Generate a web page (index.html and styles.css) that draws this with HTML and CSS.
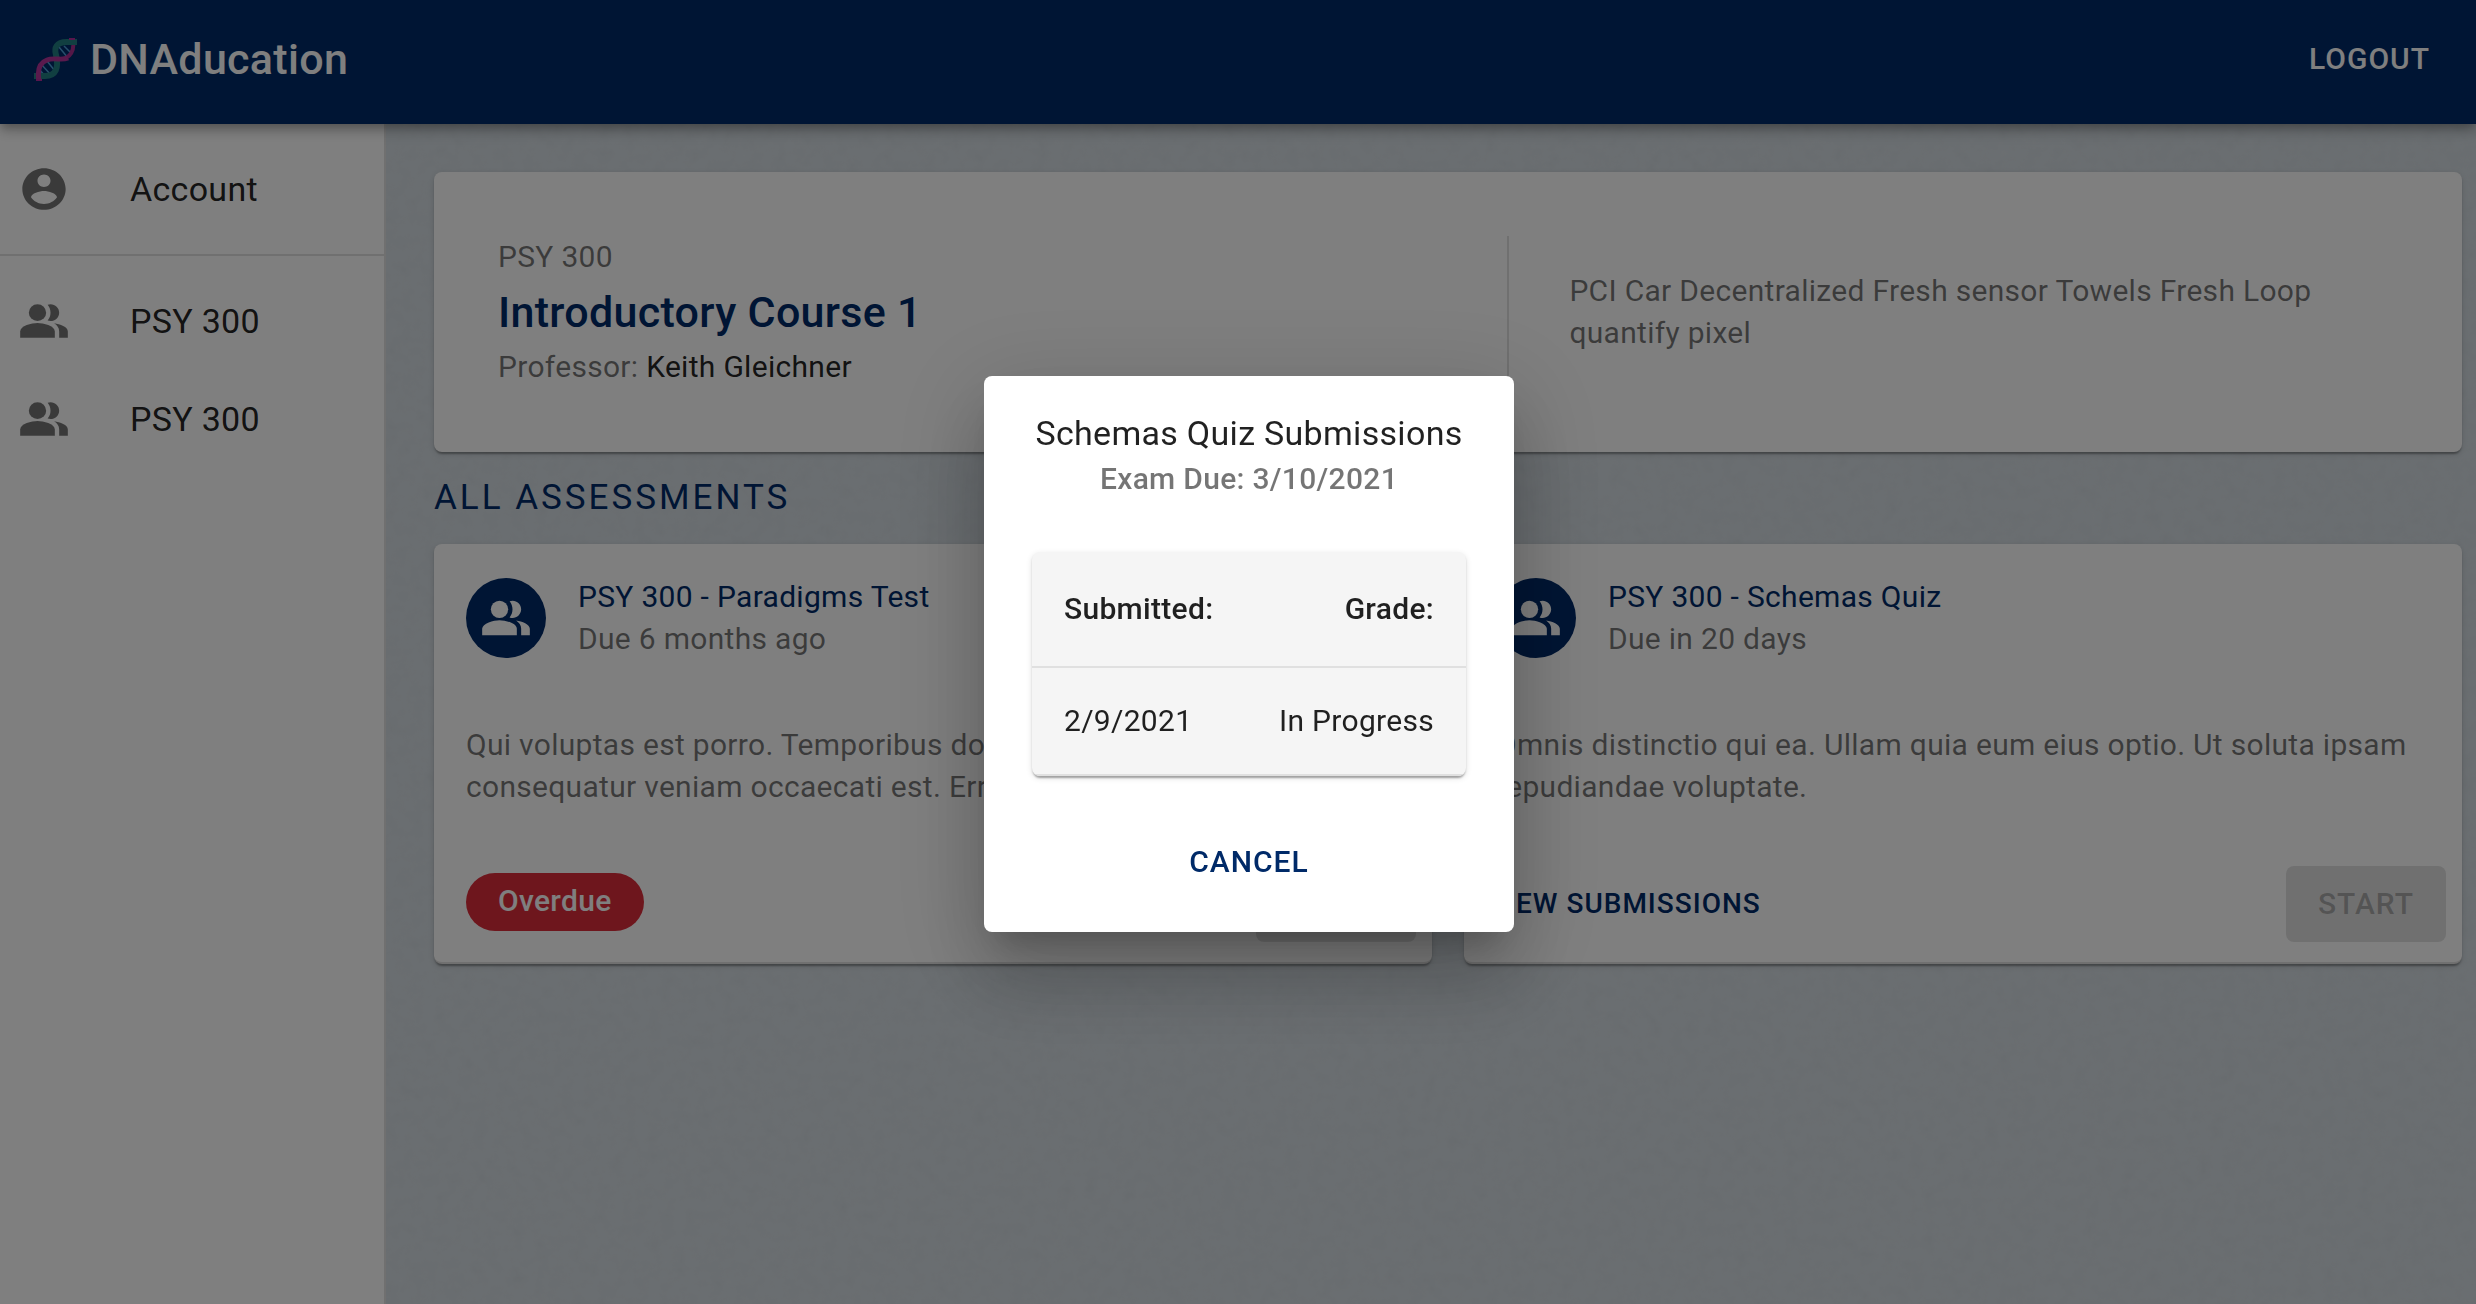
FILE: index.html
```html
<!DOCTYPE html>
<html lang="en">
<head>
  <meta charset="utf-8">
  <meta name="viewport" content="width=device-width, initial-scale=1">
  <title>DNAducation</title>
  <link rel="stylesheet" href="styles.css">
</head>
<body>
  <svg class="sprite" aria-hidden="true">
    <symbol id="icon-people" viewBox="0 0 24 24" preserveAspectRatio="none">
      <path d="M16.67 13.13C18.04 14.06 19 15.32 19 17v3h4v-3c0-2.18-3.57-3.47-6.33-3.87z"/>
      <circle cx="9" cy="8" r="4"/>
      <path d="M15 12c2.21 0 4-1.79 4-4s-1.79-4-4-4c-.47 0-.91.1-1.33.24C14.5 5.27 15 6.58 15 8s-.5 2.73-1.33 3.76c.42.14.86.24 1.33.24z"/>
      <path d="M9 13c-2.67 0-8 1.34-8 4v3h16v-3c0-2.66-5.33-4-8-4z"/>
    </symbol>
    <symbol id="icon-account" viewBox="0 0 24 24" preserveAspectRatio="none">
      <path d="M12 2C6.48 2 2 6.48 2 12s4.480 10 10 10 10-4.480 10-10S17.520 2 12 2zm0 3c1.660 0 3 1.340 3 3s-1.340 3-3 3-3-1.340-3-3 1.340-3 3-3zm0 14.200c-2.500 0-4.710-1.280-6-3.220.030-1.990 4-3.080 6-3.080 1.990 0 5.970 1.090 6 3.080-1.290 1.940-3.500 3.220-6 3.220z"/>
    </symbol>
  </svg>

  <header class="appbar">
    <a class="brand" href="#">
      <svg class="brand__logo" viewBox="0 0 43 43" aria-hidden="true">
        <g fill="none">
          <path d="M25 9l9 11M30 8l8 8M7 26l10 11M13 23l8 10M5 31l6 7" stroke="#4f9fd8" stroke-width="1.500"/>
          <path d="M38 0C42 12 36 21 26 21" stroke="#a82f8e" stroke-width="4"/>
          <path d="M43 4H33C22 4 20 10 22 17C25 30 22 38 11 38H0" stroke="#237f82" stroke-width="6"/>
          <path d="M34 20C27 23 20 19 13 22C5 25 3 32 5 43" stroke="#b5359a" stroke-width="5"/>
          <path d="M35 1h6M2 42h6" stroke="#b02d9a" stroke-width="2"/>
        </g>
      </svg>
      <span>DNAducation</span>
    </a>
    <button class="btn btn--light" type="button">Logout</button>
  </header>

  <div class="shell">
    <nav class="sidebar" aria-label="Main">
      <ul class="nav">
        <li><a class="nav__link" href="#"><svg class="nav__icon" aria-hidden="true"><use href="#icon-account"/></svg>Account</a></li>
      </ul>
      <ul class="nav nav--courses">
        <li><a class="nav__link" href="#"><svg class="nav__icon" aria-hidden="true"><use href="#icon-people"/></svg>PSY 300</a></li>
        <li><a class="nav__link" href="#"><svg class="nav__icon" aria-hidden="true"><use href="#icon-people"/></svg>PSY 300</a></li>
      </ul>
    </nav>

    <main class="content">
      <svg class="texture" aria-hidden="true">
        <filter id="paper" x="0" y="0" width="100%" height="100%">
          <feTurbulence type="fractalNoise" baseFrequency="0.08" numOctaves="3" seed="4"/>
          <feColorMatrix type="saturate" values="0"/>
        </filter>
        <rect width="100%" height="100%" filter="url(#paper)"/>
      </svg>

      <section class="card course">
        <div>
          <p class="muted">PSY 300</p>
          <h1 class="course__title">Introductory Course 1</h1>
          <p class="muted">Professor: <span class="strong">Keith Gleichner</span></p>
        </div>
        <div class="course__about">
          <p class="muted">PCI Car Decentralized Fresh sensor Towels Fresh Loop quantify pixel</p>
        </div>
      </section>

      <h2 class="section-title">All Assessments</h2>

      <div class="assessments">
        <article class="card assessment">
          <header class="assessment__head">
            <span class="avatar"><svg class="avatar__icon" aria-hidden="true"><use href="#icon-people"/></svg></span>
            <div>
              <h3 class="assessment__title">PSY 300 - Paradigms Test</h3>
              <p class="muted">Due 6 months ago</p>
            </div>
          </header>
          <p class="assessment__text muted">Qui voluptas est porro. Temporibus dolorem quia et ipsum quo consequatur veniam occaecati est. Error sit.</p>
          <footer class="assessment__actions">
            <span class="chip">Overdue</span>
            <button class="btn btn--filled" type="button" disabled>Start</button>
          </footer>
        </article>

        <article class="card assessment">
          <header class="assessment__head">
            <span class="avatar"><svg class="avatar__icon" aria-hidden="true"><use href="#icon-people"/></svg></span>
            <div>
              <h3 class="assessment__title">PSY 300 - Schemas Quiz</h3>
              <p class="muted">Due in 20 days</p>
            </div>
          </header>
          <p class="assessment__text muted">Omnis distinctio qui ea. Ullam quia eum eius optio. Ut soluta ipsam repudiandae voluptate.</p>
          <footer class="assessment__actions">
            <button class="btn btn--small" type="button">View Submissions</button>
            <button class="btn btn--filled" type="button" disabled>Start</button>
          </footer>
        </article>
      </div>
    </main>
  </div>

  <div class="backdrop">
    <div class="dialog" role="dialog" aria-modal="true" aria-labelledby="dialog-title">
      <h2 class="dialog__title" id="dialog-title">Schemas Quiz Submissions</h2>
      <p class="dialog__due">Exam Due: 3/10/2021</p>
      <table class="submissions">
        <thead>
          <tr><th scope="col">Submitted:</th><th scope="col">Grade:</th></tr>
        </thead>
        <tbody>
          <tr><td>2/9/2021</td><td>In Progress</td></tr>
        </tbody>
      </table>
      <button class="btn" type="button">Cancel</button>
    </div>
  </div>
</body>
</html>
```
FILE: styles.css
```css
:root {
  --primary: #002a68;
  --danger: #dc2d3a;
  --text: rgba(0, 0, 0, 0.87);
  --muted: rgba(0, 0, 0, 0.54);
  --line: rgba(0, 0, 0, 0.12);
  --card-shadow: 0 4px 2px -2px rgba(0, 0, 0, 0.2), 0 2px 2px rgba(0, 0, 0, 0.14), 0 2px 6px rgba(0, 0, 0, 0.12);
}

* {
  box-sizing: border-box;
}

body {
  display: flex;
  flex-direction: column;
  min-height: 100vh;
  margin: 0;
  font-family: Roboto, sans-serif;
  font-size: 30px;
  line-height: 42px;
  letter-spacing: 0.01em;
  color: var(--text);
  background: #d5dde3;
}

h1, h2, h3, p, ul {
  margin: 0;
  padding: 0;
}

a {
  color: inherit;
  text-decoration: none;
}

.sprite {
  position: absolute;
  width: 0;
  height: 0;
}

.muted {
  color: var(--muted);
}

.strong {
  color: var(--text);
}

/* Buttons */

.btn {
  height: 76px;
  padding: 0 16px;
  border: 0;
  border-radius: 8px;
  background: none;
  font: 500 30px/42px Roboto, sans-serif;
  letter-spacing: 1px;
  text-transform: uppercase;
  color: var(--primary);
}

.btn--light {
  color: #fff;
}

.btn--small {
  padding: 0 8px;
  font-size: 28px;
}

.btn--filled {
  padding: 0 32px;
  background: var(--line);
}

.btn:disabled {
  color: rgba(0, 0, 0, 0.26);
}

/* App bar */

.appbar {
  position: relative;
  z-index: 1;
  display: flex;
  align-items: center;
  justify-content: space-between;
  height: 124px;
  padding: 0 30px 6px 34px;
  color: #fff;
  background: var(--primary);
  box-shadow: 0 4px 8px -2px rgba(0, 0, 0, 0.2), 0 8px 10px rgba(0, 0, 0, 0.14), 0 2px 20px rgba(0, 0, 0, 0.12);
}

.brand {
  display: flex;
  align-items: center;
  gap: 13px;
  font-size: 43px;
  font-weight: 500;
}

.brand__logo {
  width: 43px;
  height: 43px;
}

/* Page frame */

.shell {
  display: flex;
  flex: 1;
}

.sidebar {
  flex: none;
  width: 386px;
  border-right: 2px solid var(--line);
  background: #fff;
}

.nav {
  padding: 16px 0;
  list-style: none;
}

.nav--courses {
  border-top: 2px solid var(--line);
}

.nav__link {
  display: flex;
  align-items: center;
  gap: 60px;
  height: 98px;
  padding-left: 18px;
  font-size: 34px;
}

.nav__icon {
  width: 52px;
  height: 50px;
  fill: var(--muted);
}

.content {
  position: relative;
  flex: 1;
  min-width: 0;
  padding: 48px 14px 48px 48px;
}

.texture {
  position: absolute;
  inset: 0;
  z-index: -1;
  width: 100%;
  height: 100%;
  opacity: 0.08;
}

.card {
  border-radius: 8px;
  background: #fff;
  box-shadow: var(--card-shadow);
}

/* Course summary */

.course {
  display: grid;
  grid-template-columns: minmax(0, 17fr) minmax(0, 15fr);
  padding: 64px;
}

.course__title {
  font-size: 43px;
  font-weight: 500;
  line-height: 68px;
  color: var(--primary);
}

.course__about {
  display: flex;
  align-items: center;
  padding-left: 60px;
  border-left: 2px solid var(--line);
}

.section-title {
  font-size: 35px;
  font-weight: 400;
  line-height: 92px;
  letter-spacing: 3px;
  text-transform: uppercase;
  color: var(--primary);
}

/* Assessments */

.assessments {
  display: grid;
  grid-template-columns: repeat(2, minmax(0, 1fr));
  gap: 32px;
}

.assessment {
  padding-bottom: 20px;
  border-bottom: 2px solid var(--line);
}

.assessment__head {
  display: flex;
  align-items: center;
  gap: 32px;
  padding: 32px;
}

.avatar {
  display: grid;
  place-items: center;
  flex: none;
  width: 80px;
  height: 80px;
  border-radius: 50%;
  background: var(--primary);
}

.avatar__icon {
  width: 52px;
  height: 52px;
  fill: #fff;
}

.assessment__title {
  font-size: 30px;
  font-weight: 400;
  color: var(--primary);
}

.assessment__text {
  padding: 32px 32px 58px;
}

.assessment__actions {
  display: flex;
  align-items: center;
  justify-content: space-between;
  padding: 0 16px;
}

.chip {
  margin: 0 16px 4px;
  padding: 7px 32px 9px;
  border-radius: 29px;
  font-weight: 500;
  color: #fff;
  background: var(--danger);
}

/* Submissions dialog */

.backdrop {
  position: fixed;
  inset: 0;
  z-index: 2;
  display: grid;
  place-items: center;
  padding: 4px 0 0 22px;
  background: rgba(0, 0, 0, 0.5);
}

.dialog {
  display: flex;
  flex-direction: column;
  align-items: center;
  width: 530px;
  max-width: 100%;
  padding: 32px 48px;
  border-radius: 8px;
  background: #fff;
  box-shadow: 0 22px 30px -14px rgba(0, 0, 0, 0.2), 0 48px 76px 6px rgba(0, 0, 0, 0.14), 0 18px 92px 16px rgba(0, 0, 0, 0.12);
}

.dialog__title {
  font-size: 34px;
  font-weight: 400;
  line-height: 50px;
  white-space: nowrap;
}

.dialog__due {
  font-weight: 500;
  color: var(--muted);
}

.submissions {
  width: 100%;
  margin: 52px 0 48px;
  border-spacing: 0;
  border-radius: 8px;
  overflow: hidden;
  background: #f5f5f5;
  box-shadow: var(--card-shadow);
}

.submissions th,
.submissions td {
  padding: 32px;
  border-bottom: 2px solid #e0e0e0;
  text-align: left;
  white-space: nowrap;
}

.submissions th {
  font-weight: 500;
  line-height: 50px;
}

.submissions th + th,
.submissions td + td {
  padding-left: 0;
  text-align: right;
}
```
